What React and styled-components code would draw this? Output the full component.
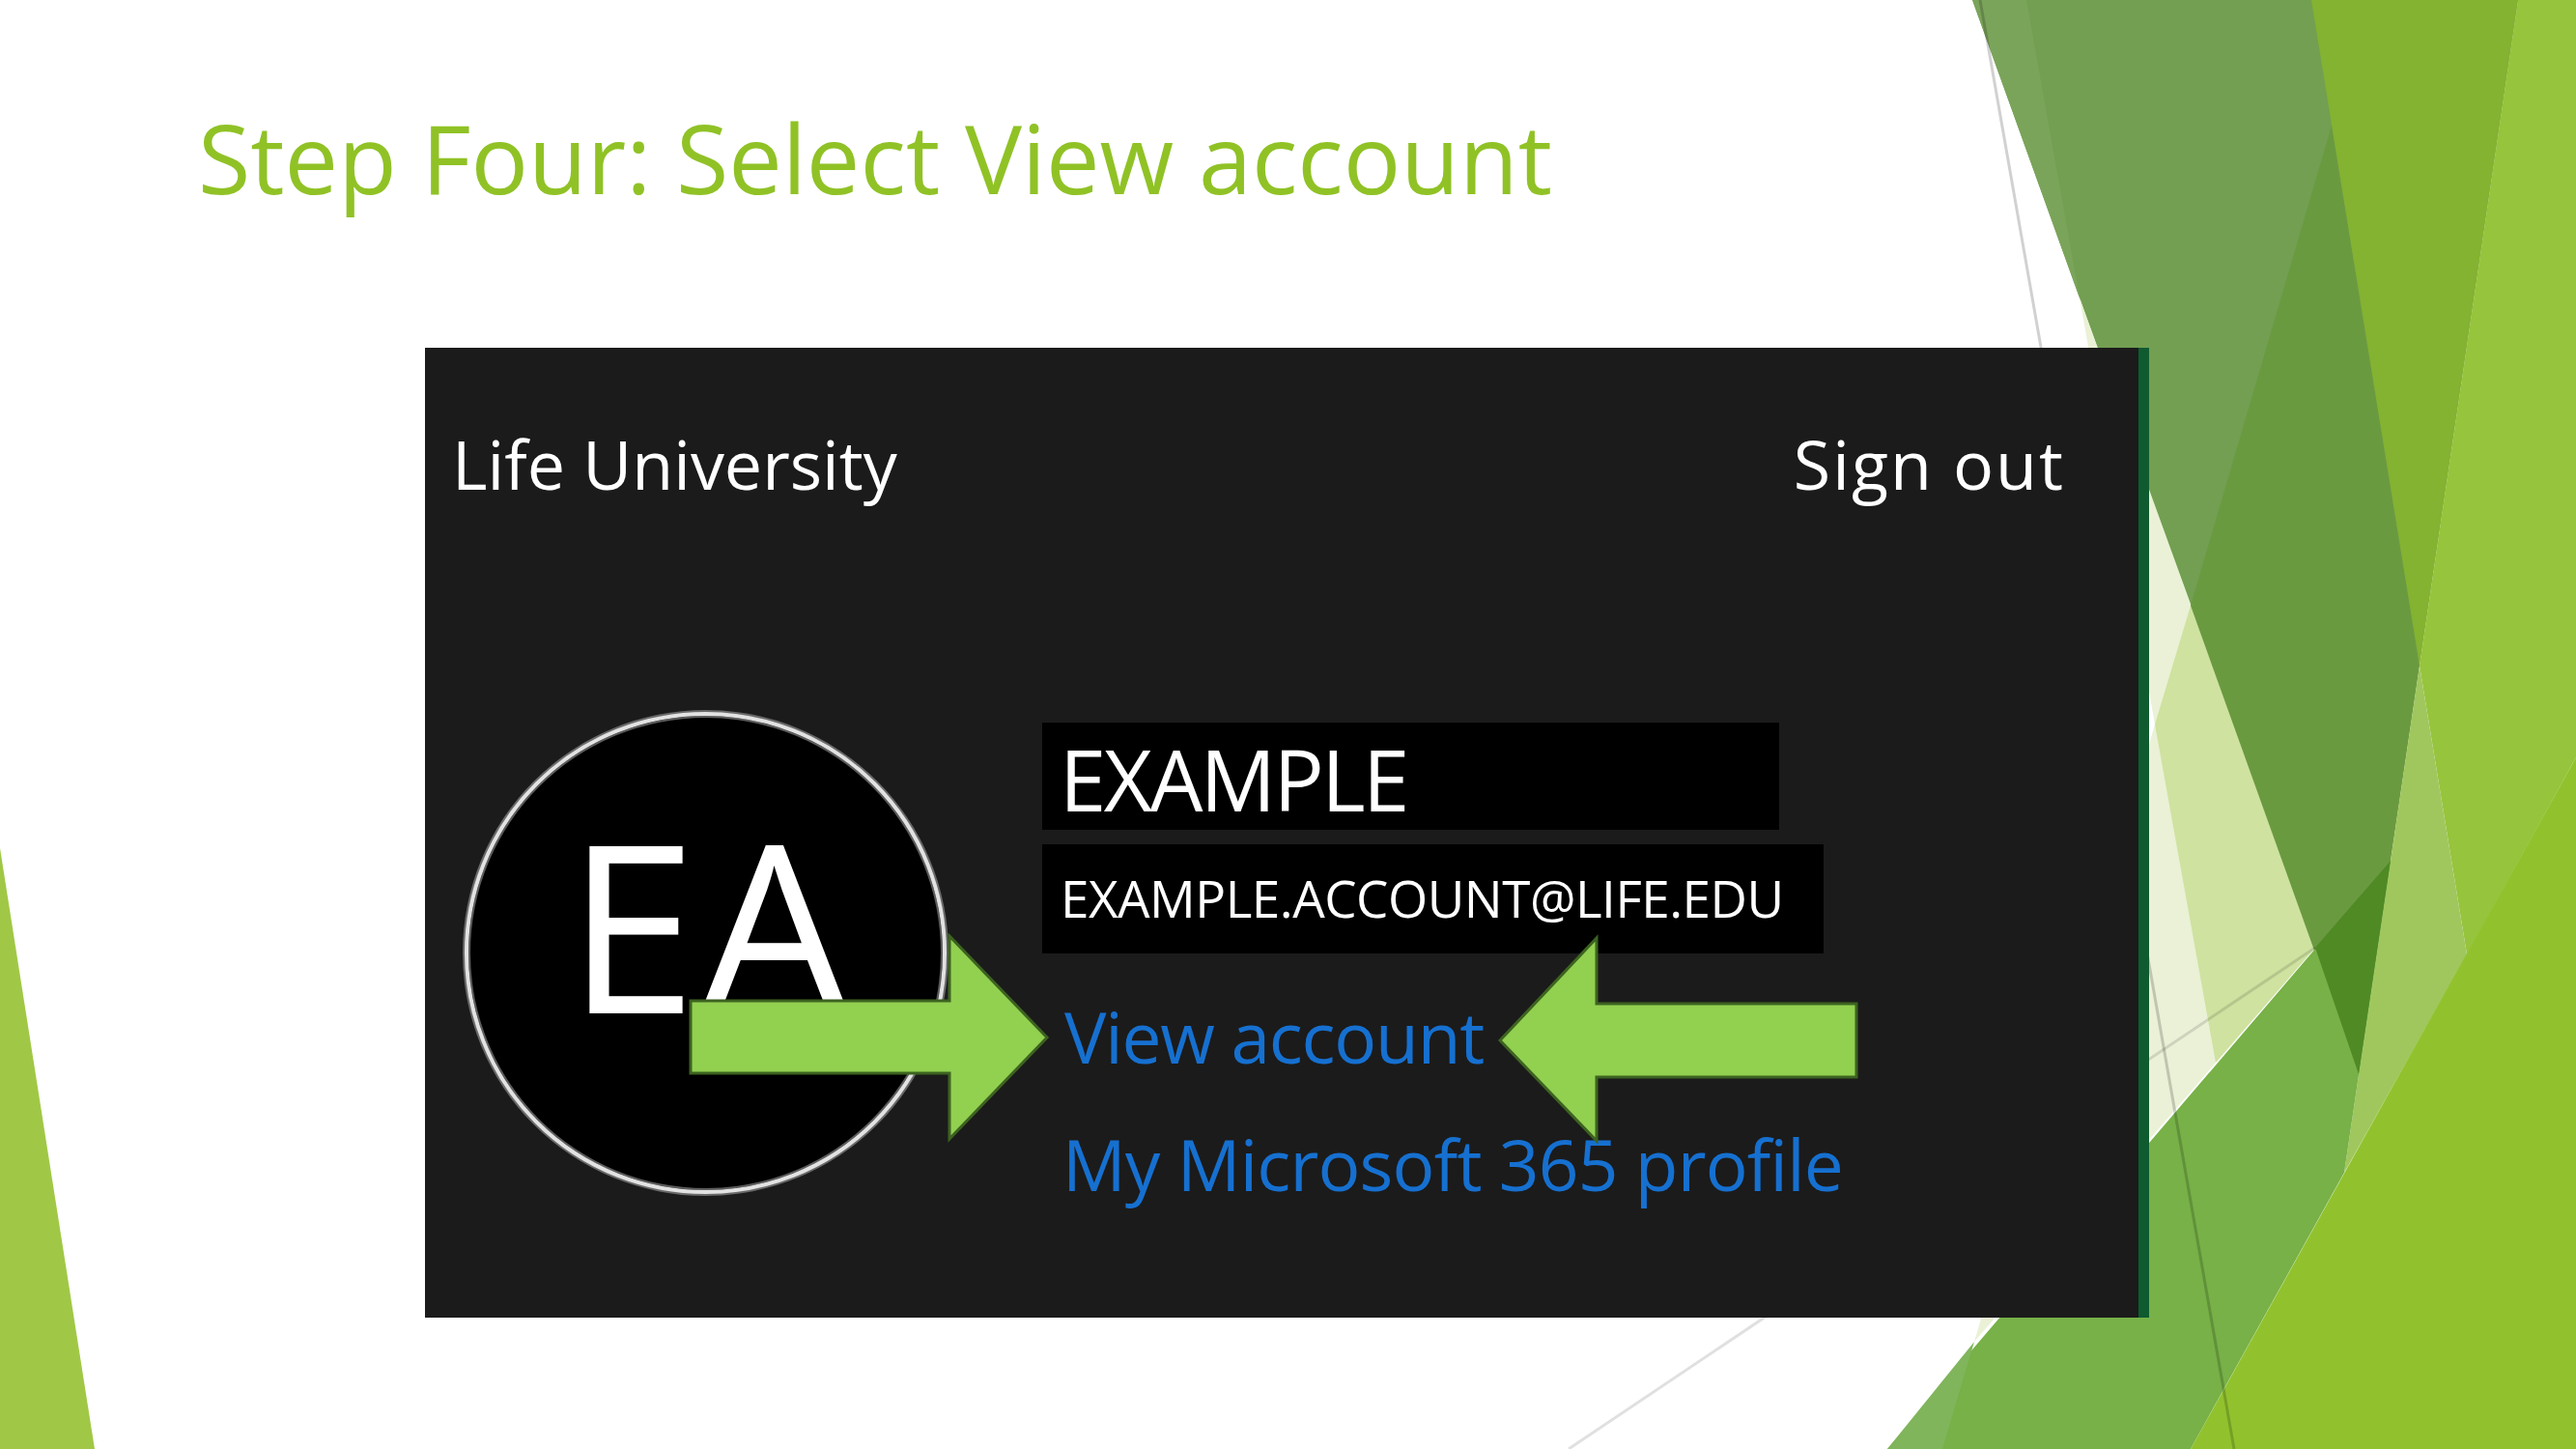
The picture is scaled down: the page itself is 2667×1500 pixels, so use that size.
import React from "react";
import styled, { createGlobalStyle } from "styled-components";

const GlobalStyle = createGlobalStyle`
  html, body {
    margin: 0;
    padding: 0;
    background: #ffffff;
  }
  body {
    font-family: "Open Sans", "Noto Sans", sans-serif;
  }
`;

const Slide = styled.div`
  position: relative;
  width: 2667px;
  height: 1500px;
  overflow: hidden;
  background: #ffffff;
`;

const Decor = styled.svg`
  position: absolute;
  left: 0;
  top: 0;
  width: 2667px;
  height: 1500px;
  z-index: 0;
  pointer-events: none;
`;

const Content = styled.div`
  position: relative;
  z-index: 1;
  display: flex;
  flex-direction: column;
  align-items: flex-start;
  padding-top: 113px;
`;

const Title = styled.h1`
  margin: 0 0 0 205px;
  font-family: "Open Sans", "Noto Sans", sans-serif;
  font-weight: 400;
  font-size: 99px;
  line-height: 1;
  color: #90c226;
  white-space: nowrap;
`;

const Panel = styled.section`
  position: relative;
  margin: 148px 0 0 440px;
  width: 1774px;
  height: 1004px;
  background: #1b1b1b;
  border-right: 11px solid #0f5b2f;
  display: flex;
  flex-direction: column;
`;

const Header = styled.header`
  display: flex;
  justify-content: space-between;
  align-items: flex-start;
  padding: 85px 76px 0 28px;
`;

const HeaderText = styled.span`
  font-family: "Open Sans", "Noto Sans", sans-serif;
  font-size: 70px;
  line-height: 1;
  color: #ffffff;
  letter-spacing: ${(p) => p.$ls || 0}px;
  white-space: nowrap;
`;

const Body = styled.div`
  display: flex;
  align-items: flex-start;
  margin-top: 222px;
  padding-left: 41px;
`;

const Avatar = styled.div`
  box-sizing: border-box;
  width: 499px;
  height: 499px;
  flex-shrink: 0;
  border-radius: 50%;
  background: #000000;
  border: 4px solid #e2e2e2;
  box-shadow: 0 0 0 2px #6a6a6a, inset 0 0 0 2px #5c5c5c;
  display: flex;
  align-items: center;
  justify-content: center;
  padding-bottom: 64px;
  padding-left: 4px;
`;

const Initials = styled.span`
  font-family: "Open Sans", "Noto Sans", sans-serif;
  font-size: 242px;
  line-height: 1;
  color: #ffffff;
  letter-spacing: 4px;
  margin-right: -4px;
`;

const Details = styled.div`
  display: flex;
  flex-direction: column;
  align-items: flex-start;
  margin: 11px 0 0 99px;
`;

const InfoBox = styled.div`
  box-sizing: border-box;
  width: ${(p) => p.$w}px;
  height: ${(p) => p.$h}px;
  margin-top: ${(p) => p.$mt || 0}px;
  padding: ${(p) => p.$pt}px 0 0 ${(p) => p.$pl}px;
  background: #000000;
  color: #ffffff;
  font-family: "Open Sans", "Noto Sans", sans-serif;
  font-size: ${(p) => p.$fs}px;
  line-height: 1;
  letter-spacing: ${(p) => p.$ls}px;
  white-space: nowrap;
`;

const AccountLink = styled.a`
  display: block;
  margin-top: ${(p) => p.$mt}px;
  padding-left: ${(p) => p.$pl}px;
  font-family: "Open Sans", "Noto Sans", sans-serif;
  font-size: 73px;
  line-height: 1;
  letter-spacing: ${(p) => p.$ls}px;
  color: #1670d0;
  text-decoration: none;
  white-space: nowrap;
`;

const ArrowLayer = styled.svg`
  position: absolute;
  left: 0;
  top: 0;
  width: 1774px;
  height: 1004px;
  overflow: visible;
  pointer-events: none;
  z-index: 2;
`;

const decorShapes = [
  { pts: "0,878 98,1500 0,1500", fill: "#a0c846" },
  { pts: "2042,0 2607,0 2442,1112", fill: "#729f51" },
  { pts: "2042,0 2098,0 2153,308", fill: "#7ba45b" },
  { pts: "2153,308 2397,981 2044,1389 2231,750", fill: "#eaf1d6" },
  { pts: "2268,627 2397,981 2294,1100 2231,750", fill: "#cfe2a0" },
  { pts: "2268,627 2414,130 2505,689 2442,1112", fill: "#6a9a40" },
  { pts: "2393,0 2607,0 2505,689", fill: "#84b231" },
  { pts: "2607,0 2667,0 2667,784 2554,988 2505,689", fill: "#96c43c" },
  { pts: "2505,689 2554,988 2427,1214", fill: "#a0c75e" },
  { pts: "1954,1500 2475,891 2427,1214 2268,1500", fill: "#77b147" },
  { pts: "2397,981 2475,891 2442,1112", fill: "#4f8a25" },
  { pts: "2044,1389 2011,1500 1954,1500", fill: "#80b55c" },
  { pts: "2268,1500 2667,784 2667,1500", fill: "#91c22e" },
];

const arrows = [
  "275,676 543,676 543,609 644,714 543,819 543,751 275,751",
  "1113,717 1213,611 1213,679 1482,679 1482,755 1213,755 1213,821",
];

export default function App() {
  return (
    <>
      <GlobalStyle />
      <Slide>
        <Decor viewBox="0 0 2667 1500" xmlns="http://www.w3.org/2000/svg">
          {decorShapes.map((s, i) => (
            <polygon key={i} points={s.pts} fill={s.fill} />
          ))}
          <line x1="2050" y1="0" x2="2313" y2="1500" stroke="rgba(0,0,0,0.18)" strokeWidth="3" />
          <line x1="1624" y1="1500" x2="2397" y2="981" stroke="rgba(0,0,0,0.12)" strokeWidth="3" />
        </Decor>
        <Content>
          <Title>Step Four: Select View account</Title>
          <Panel>
            <Header>
              <HeaderText>Life University</HeaderText>
              <HeaderText $ls={2}>Sign out</HeaderText>
            </Header>
            <Body>
              <Avatar>
                <Initials>EA</Initials>
              </Avatar>
              <Details>
                <InfoBox $w={763} $h={111} $pt={15} $pl={18} $fs={87} $ls={-2.6}>
                  EXAMPLE
                </InfoBox>
                <InfoBox $w={809} $h={113} $mt={15} $pt={29} $pl={19} $fs={53} $ls={-0.5}>
                  EXAMPLE.ACCOUNT@LIFE.EDU
                </InfoBox>
                <AccountLink href="#" $mt={49} $pl={23} $ls={-1.2}>
                  View account
                </AccountLink>
                <AccountLink href="#" $mt={59} $pl={21} $ls={-0.8}>
                  My Microsoft 365 profile
                </AccountLink>
              </Details>
            </Body>
            <ArrowLayer viewBox="0 0 1774 1004" xmlns="http://www.w3.org/2000/svg">
              {arrows.map((pts, i) => (
                <polygon
                  key={i}
                  points={pts}
                  fill="#92d050"
                  stroke="#3d6320"
                  strokeWidth="3"
                  strokeLinejoin="miter"
                />
              ))}
            </ArrowLayer>
          </Panel>
        </Content>
      </Slide>
    </>
  );
}
